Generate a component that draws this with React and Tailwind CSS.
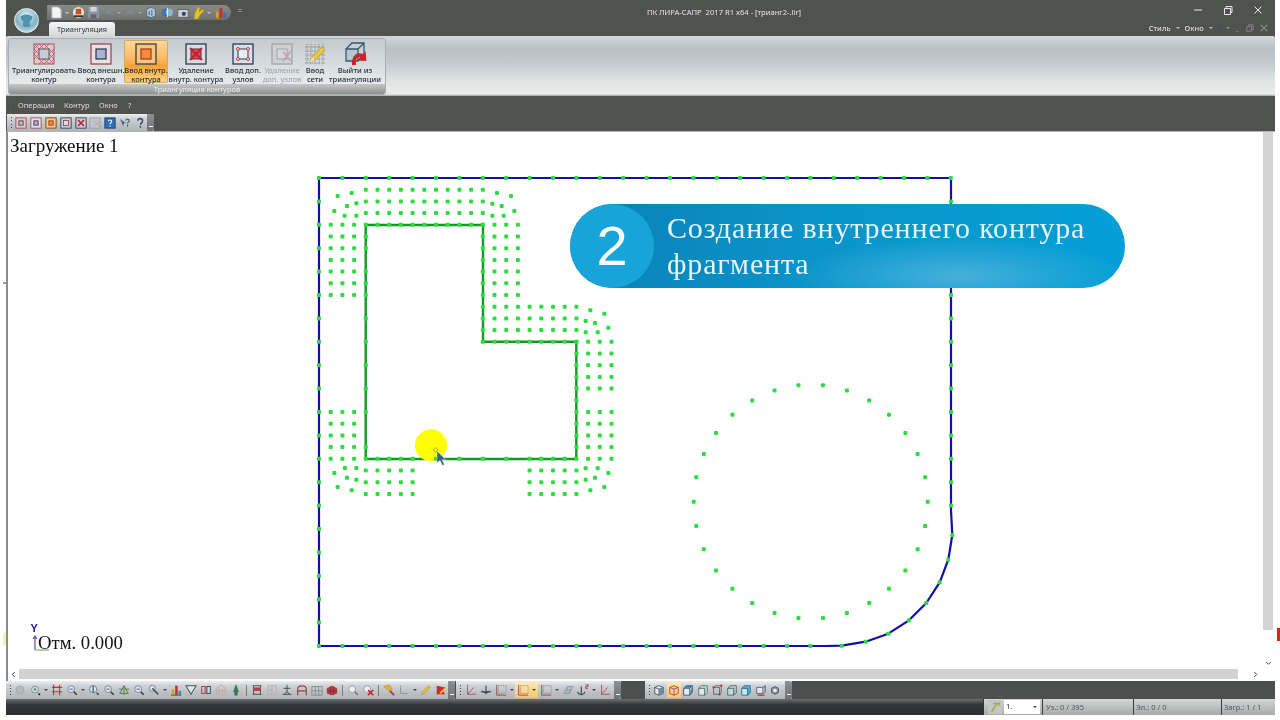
import React from "react";

const X = (i) => 319 + 11.7 * i;
const Y = (j) => 178 + 11.7 * j;
const range = (a, b) => Array.from({ length: b - a + 1 }, (_, k) => a + k);

function buildDots() {
  const d = [];
  const grid = (is, js) => js.forEach((j) => is.forEach((i) => d.push([X(i), Y(j)])));
  grid(range(4, 14), [1, 2, 3, 4]);
  grid([1, 2, 3], range(4, 10));
  grid([15, 16, 17], range(4, 10));
  grid([14], range(4, 14));
  grid(range(15, 22), [11, 12, 13, 14]);
  grid([23, 24, 25], range(14, 18));
  grid([23, 24, 25], range(20, 24));
  grid([1, 2, 3], range(20, 24));
  grid([22], range(14, 24));
  grid([4], [5, 6, 8, 9, 10, 12, 14, 16, 18, 20, 23, 24]);
  grid([5, 6, 7, 8, 10, 12, 14, 16, 18, 19, 20, 21], [24]);
  grid(range(4, 8), [25, 26, 27]);
  grid(range(18, 22), [25, 26, 27]);
  const zoomA = [
    [83, 78], [125, 69], [73, 123], [111, 108], [139, 100], [104, 137], [139, 137],
    [561, 69], [603, 78], [547, 101], [575, 108], [613, 123], [547, 137], [581, 137],
    [841, 421], [883, 431], [827, 453], [855, 459], [895, 473], [827, 487], [863, 487],
  ];
  zoomA.forEach(([a, b]) => d.push([310 + a / 3, 170 + b / 3]));
  const zoomB = [
    [73, 399], [111, 413], [139, 419], [83, 441], [125, 451], [105, 384], [139, 384],
    [827, 385], [863, 385], [895, 399], [855, 413], [827, 419], [883, 441], [841, 451],
  ];
  zoomB.forEach(([a, b]) => d.push([310 + a / 3, 340 + b / 3]));
  range(0, 29).forEach((k) => {
    const t = (k * 12 * Math.PI) / 180;
    d.push([810.7 + 117 * Math.cos(t), 501.7 + 117 * Math.sin(t)]);
  });
  return d;
}

function buildOuter() {
  const d = [];
  range(0, 27).forEach((k) => d.push([319 + 23.4 * k, 178]));
  range(1, 20).forEach((k) => d.push([319, 178 + 23.4 * k]));
  range(1, 14).forEach((k) => d.push([951, 178 + 23.4 * k]));
  range(1, 21).forEach((k) => d.push([319 + 23.4 * k, 646]));
  [[952.3, 535], [948.3, 559.7], [939.7, 582.3], [926.3, 603], [909, 620.3], [888.3, 633.7], [865.7, 641.7], [841.7, 645.7]].forEach((p) => d.push(p));
  return d;
}

const dots = buildDots();
const outer = buildOuter();

function Drawing() {
  return (
    <svg viewBox="8 132 1255 537" className="block w-[1255px] h-[537px]">
      <path d="M319 178H951V510L952.300 535L948.300 559.700L939.700 582.300L926.300 603L909 620.300L888.300 633.700L865.700 641.700L841.700 645.700L826 646H319Z" fill="none" stroke="#1010a8" strokeWidth="2.200" strokeLinejoin="round" />
      <path d="M365.7 225H483V341.7H576.3V459H365.7Z" fill="none" stroke="#129a24" strokeWidth="2.400" />
      <circle cx="431" cy="445.3" r="16" fill="#ffff00" />
      {dots.map(([x, y], k) => (
        <rect key={k} x={x - 2} y={y - 2} width="4" height="4" rx="1" fill="#2fdc40" />
      ))}
      {outer.map(([x, y], k) => (
        <rect key={k} x={x - 2} y={y - 2} width="4" height="4" rx="1" fill="#2fdc40" />
      ))}
      <path d="M435.7 447.5l2.2 2.5-2.2 2.5-2.2-2.5Z" fill="none" stroke="#8a8a30" strokeWidth="0.7" />
      <path d="M437 451l0 12 3-2.6 2.4 5 2-1-2.4-4.6 3.6-.2Z" fill="#3c5f8f" stroke="#dfe8f0" strokeWidth="0.5" />
      <text x="30.500" y="632" fontFamily="'Liberation Sans',sans-serif" fontWeight="700" fontSize="11" fill="#1a1aa8">Y</text>
      <path d="M35 650V636M33 639l2-3 2 3" fill="none" stroke="#6a5ab0" strokeWidth="1.3" />
      <path d="M35 650H49" fill="none" stroke="#6f9a6f" strokeWidth="1" />
    </svg>
  );
}

/* ---------- Ribbon icons ---------- */
function IconMesh() {
  return (
    <svg viewBox="0 0 22 22" className="w-[22px] h-[22px]">
      <rect x="1" y="1" width="20" height="20" fill="#e6c6ce" stroke="#a8515f" strokeWidth="1" />
      <path d="M1 6L6 1M1 11L11 1M1 16L16 1M6 21L21 6M11 21L21 11M16 21L21 16M6 1L21 16M1 1L21 21M1 6L16 21M11 1L21 11M1 11L11 21" stroke="#b4485c" strokeWidth="0.7" fill="none" />
      <rect x="6" y="6" width="10" height="10" fill="#c8ccd0" stroke="#55585c" strokeWidth="1" />
    </svg>
  );
}
function IconOuter() {
  return (
    <svg viewBox="0 0 22 22" className="w-[22px] h-[22px]">
      <rect x="1" y="1" width="20" height="20" fill="#e4e2e6" stroke="#a8454f" strokeWidth="1.3" />
      <rect x="6" y="6" width="10" height="10" fill="#a9b4d0" stroke="#2e3444" strokeWidth="1.2" />
    </svg>
  );
}
function IconInner() {
  return (
    <svg viewBox="0 0 22 22" className="w-[22px] h-[22px]">
      <rect x="1" y="1" width="20" height="20" fill="#f9c47c" stroke="#3a3f48" strokeWidth="1.3" />
      <rect x="6" y="6" width="10" height="10" fill="#f58c3c" stroke="#a8302c" strokeWidth="1.2" />
    </svg>
  );
}
function IconDelete() {
  return (
    <svg viewBox="0 0 22 22" className="w-[22px] h-[22px]">
      <rect x="1" y="1" width="20" height="20" fill="#d8dce6" stroke="#2e3a50" strokeWidth="1.3" />
      <rect x="6" y="6" width="10" height="10" fill="#c85060" stroke="#6e2430" strokeWidth="1" />
      <path d="M5 5L17 17M17 5L5 17" stroke="#cc1f2a" strokeWidth="2" />
    </svg>
  );
}
function IconNodes() {
  return (
    <svg viewBox="0 0 22 22" className="w-[22px] h-[22px]">
      <rect x="1" y="1" width="20" height="20" fill="#d8dfe8" stroke="#2e3a50" strokeWidth="1.3" />
      <rect x="6" y="6" width="10" height="10" fill="#e8ecf0" stroke="#333a48" strokeWidth="1" />
      {[[6, 6], [16, 6], [6, 16], [16, 16]].map(([x, y], k) => (
        <circle key={k} cx={x} cy={y} r="1.5" fill="#e8e8e8" stroke="#c02a32" strokeWidth="0.9" />
      ))}
    </svg>
  );
}
function IconDelNodes() {
  return (
    <svg viewBox="0 0 22 22" className="w-[22px] h-[22px]">
      <rect x="1" y="1" width="20" height="20" fill="#ced2d8" stroke="#a2a6ac" strokeWidth="1.3" />
      <rect x="6" y="6" width="10" height="10" fill="#d4d8dc" stroke="#a2a2a8" strokeWidth="1" />
      <path d="M12 9L20 18M20 8L12 18" stroke="#b8a4a8" strokeWidth="1.5" />
    </svg>
  );
}
function IconNet() {
  return (
    <svg viewBox="0 0 22 22" className="w-[22px] h-[22px]">
      <path d="M1 4H21M1 8H21M1 12H21M1 16H21M1 20H21M3 1V22M7 1V22M11 1V22M15 1V22M19 1V22" stroke="#7a7c8c" strokeWidth="0.8" strokeDasharray="1.3 1" />
      <path d="M5 20L8 14L18 4L21 7L11 17Z" fill="#f0c832" stroke="#a08a30" strokeWidth="0.6" />
      <path d="M5 20L8 14L11 17Z" fill="#e8e0c0" />
    </svg>
  );
}
function IconExit() {
  return (
    <svg viewBox="0 0 24 24" className="w-[24px] h-[24px]">
      <path d="M3 7H15V19H3Z" fill="#b8c8d2" />
      <path d="M3 7H15V19H3ZM3 7L9 1H21V13L15 19M15 7L21 1" fill="none" stroke="#2f5a70" strokeWidth="1.300" />
      <path d="M9 23C8 14 14 9 20 12L22.500 9L23.500 19L14 18.500L17 15.500C14 14.500 12.500 17 13 23Z" fill="#c8242c" />
    </svg>
  );
}

function RibbonBtn({ w, l1, l2, icon, active, disabled }) {
  return (
    <div className={`${w} h-[43px] flex flex-col items-center pt-[2px] rounded-[2px] ${active ? "bg-[linear-gradient(180deg,#fddaa0_0%,#fbb85c_45%,#f8a234_60%,#fcd98a_100%)] shadow-[inset_0_0_0_1px_#d9a860]" : ""}`}>
      <div className="h-[23px] flex items-center justify-center">{icon}</div>
      <div className={`mt-[1px] text-[7.5px] leading-[8.500px] text-center whitespace-nowrap font-medium ${disabled ? "text-[#a4aab0]" : "text-[#27303a]"}`}>
        <div>{l1}</div>
        <div>{l2}</div>
      </div>
    </div>
  );
}

/* ---------- Small toolbar icons ---------- */
function Mini({ k, size = 13 }) {
  const s = { width: size, height: size };
  const body = {
    tri: <><rect x="1" y="1" width="12" height="12" fill="#e3c5cd" stroke="#a04a5c" /><rect x="4.5" y="4.5" width="5" height="5" fill="#b9bcc4" stroke="#444" /></>,
    out: <><rect x="1" y="1" width="12" height="12" fill="#e4e2e6" stroke="#a8454f" /><rect x="4.5" y="4.5" width="5" height="5" fill="#a9b4d0" stroke="#2e3444" /></>,
    inn: <><rect x="0" y="0" width="14" height="14" fill="#fbc777" /><rect x="1" y="1" width="12" height="12" fill="#fbc777" stroke="#444" /><rect x="4.5" y="4.5" width="5" height="5" fill="#f58c3c" stroke="#a8302c" /></>,
    nod: <><rect x="1" y="1" width="12" height="12" fill="#c9cfd8" stroke="#2e3a50" /><rect x="4" y="4" width="6" height="6" fill="#d9dde2" stroke="#a04050" /></>,
    del: <><rect x="1" y="1" width="12" height="12" fill="#c9cfd8" stroke="#2e3a50" /><path d="M3.5 3.5L10.5 10.5M10.5 3.5L3.5 10.5" stroke="#c81f2a" strokeWidth="2" /></>,
    dis: <><rect x="1" y="1" width="12" height="12" fill="#c2c6ca" stroke="#9a9ea4" /><path d="M6 5L12 11M12 5L6 11" stroke="#b09ca0" /></>,
    help: <><rect x="1" y="1" width="12" height="12" fill="#2f6fb4" stroke="#1c3a68" /><path d="M5 5c0-2 4-2 4 0 0 2-2 1.500-2 3.500M7 10v1.500" stroke="#fff" fill="none" strokeWidth="1.2" /></>,
    helpArrow: <><path d="M1 2L5 11L6 7L9 8Z" fill="#5a6a8a" /><path d="M8 4c0-2 4-2 4 0 0 2-2 1.500-2 3.500M10 9v2" stroke="#38486a" fill="none" strokeWidth="1.2" /></>,
    q: <path d="M4.500 4.500c0-3.500 5.500-3.500 5.500 0 0 2.500-2.500 2-2.500 4.500M7.500 10.500v2" stroke="#3f4a6a" fill="none" strokeWidth="1.800" />,
    faint: <circle cx="7" cy="7" r="4.500" fill="#b8babc" stroke="#a2a4a6" />,
    target: <><circle cx="7" cy="6.500" r="4" fill="#d8dde2" stroke="#6a8a8a" /><circle cx="7" cy="6.500" r="1.500" fill="#3a9a5a" /><circle cx="12" cy="12" r="1.200" fill="#222" /></>,
    grid: <path d="M3 1V13M10 1V13M1 4H13M1 9H13" stroke="#b83a48" strokeWidth="1.300" fill="none" />,
    mag: <><circle cx="6" cy="6" r="4" fill="#dde4ea" stroke="#6c8090" /><path d="M4 6H8" stroke="#3a5a70" /><path d="M9 9L12.500 12.500" stroke="#333" strokeWidth="1.500" /></>,
    mag2: <><circle cx="6" cy="6" r="4.200" fill="#dde4ea" stroke="#5a7888" /><path d="M6 2V10" stroke="#2a4a60" strokeWidth="1.300" /><path d="M10 10L12.500 12.500" stroke="#333" strokeWidth="1.400" /></>,
    star: <><path d="M2 11L7 2L12 11ZM1 6H13M7 2V13" fill="none" stroke="#3a7a5a" strokeWidth="1" /><circle cx="7" cy="7" r="1.800" fill="#b8a020" /></>,
    pencilMag: <><circle cx="5" cy="5" r="3.500" fill="#dde4ea" stroke="#6c8090" /><path d="M5 5L12 12" stroke="#4a5a70" strokeWidth="2" /></>,
    chart: <><rect x="2" y="6" width="3" height="7" fill="#d8a020" /><rect x="6" y="2" width="3" height="11" fill="#c03030" /><rect x="10" y="8" width="3" height="5" fill="#3a8ac0" /><path d="M1 13H13" stroke="#2a7a3a" strokeWidth="1.200" /></>,
    funnel: <path d="M1 2H13L7 12Z" fill="#dfe6ea" stroke="#4a5a6a" strokeWidth="1.200" />,
    mirror: <><path d="M2 3H6V11H2Z" fill="none" stroke="#b8404a" strokeWidth="1.200" /><path d="M8 3H12V11H8Z" fill="#cfe0ea" stroke="#3a4a6a" strokeWidth="1.200" /></>,
    bridge: <path d="M2 13V5L7 1L12 5V13M5 13V6M9 13V6M2 8H12" stroke="#c8a0a0" fill="none" />,
    tree: <path d="M7 1L10 9H8.500V13H5.500V9H4Z" fill="#3a7a50" stroke="#2a5a3a" strokeWidth="0.500" />,
    frameR: <><path d="M2 2H12M2 12H12M3 2V12M11 2V12M3 7H11" stroke="#444" fill="none" /><rect x="3" y="4" width="8" height="4" fill="#c03a48" /></>,
    frameL: <path d="M2 2H12V12H2ZM7 2V12M2 7H7" stroke="#b8b0a8" fill="none" />,
    anchorB: <path d="M7 1V9M3 5H11M2 12H12M4 12L7 9L10 12" stroke="#3a3a3a" fill="none" />,
    archR: <path d="M2 13V6C2 1 12 1 12 6V13M2 8H12" stroke="#a03a48" strokeWidth="1.400" fill="none" />,
    frameG: <path d="M1 3H13V13H1ZM5 3V13M9 3V13M1 8H13" stroke="#7a8a8a" fill="none" />,
    bars: <><path d="M1 5L7 2L13 5V11L7 13L1 11Z" fill="#b83a48" /><path d="M1 8H13M5 3V13M9 3V13" stroke="#6a2430" strokeWidth="0.700" /></>,
    zm: <><circle cx="6" cy="6" r="4" fill="#eef0f2" stroke="#8a96a0" /><path d="M9 9L12.500 12.500" stroke="#667" strokeWidth="1.500" /></>,
    zmR: <><circle cx="6" cy="6" r="4" fill="#eef0f2" stroke="#8a96a0" /><path d="M7 7L13 13M13 7L7 13" stroke="#c02030" strokeWidth="1.800" /></>,
    flash: <><path d="M1 3L7 1L11 6L8 9Z" fill="#e8b030" stroke="#a07820" strokeWidth="0.500" /><path d="M8 8L13 13" stroke="#a03a48" strokeWidth="2" /></>,
    axisDot: <path d="M3 2V11H12" stroke="#6c7a8a" fill="none" strokeDasharray="2 1" />,
    pencil: <path d="M2 12L3 9L10 2L12 4L5 11Z" fill="#e8c030" stroke="#a08a30" strokeWidth="0.600" />,
    redFlag: <><path d="M2 2L12 4L9 8L12 12L2 12Z" fill="#d02a30" /><path d="M6 11L12 5" stroke="#e8c030" strokeWidth="2" /></>,
    axisL: <path d="M3 1V12H13M3 12L10 4" stroke="#a8485a" fill="none" />,
    anchor: <path d="M7 2V12M3 8C3 11 11 11 11 8M1 9H13" stroke="#38485a" fill="none" strokeWidth="1.300" />,
    xz: <><rect x="4" y="2" width="9" height="9" fill="none" stroke="#8a8a96" strokeDasharray="1.500 1" /><path d="M2 1V13H13" stroke="#a03a30" fill="none" /></>,
    hatch: <path d="M2 11L6 3H13L9 11ZM5 7H11M7 3L5 11M10 3L8 11" stroke="#7c8c96" fill="none" strokeWidth="0.800" />,
    anchor2: <><path d="M5 3V13M1 9C1 13 9 13 9 9" stroke="#38485a" fill="none" strokeWidth="1.300" /><path d="M10 1H13V3H10V5H13" stroke="#a03a48" fill="none" /></>,
    c1: <><path d="M2 4L7 2L12 4V11L7 13L2 11Z" fill="#e6ecf0" stroke="#3e4e5e" /><path d="M7 6V13M2 4L7 6L12 4" stroke="#3e4e5e" fill="none" /><path d="M7 6L12 4V11L7 13Z" fill="#6a8aa8" /></>,
    c2: <><path d="M2 4L7 2L12 4V11L7 13L2 11Z" fill="#f2d0a0" stroke="#b83a40" /><path d="M7 6V13M2 4L7 6L12 4" stroke="#b83a40" fill="none" /></>,
    c3: <><path d="M2 5H9V13H2Z" fill="#e6ecf0" stroke="#3e4e5e" /><path d="M2 5L5 2H12L9 5M12 2V10L9 13" fill="#4a8ac8" stroke="#2e5a8a" /></>,
    c4: <><path d="M2 5H9V13H2Z" fill="#e0e8ea" stroke="#5a7078" /><path d="M2 5L5 2H12V10L9 13V5Z" fill="#c4d4d8" stroke="#5a7078" /></>,
    c5: <><path d="M3 4H10V12H3ZM3 4L5 2H12V10L10 12" fill="none" stroke="#5a6068" /><circle cx="3" cy="4" r="1.300" fill="#c02a38" /><circle cx="10" cy="12" r="1.300" fill="#c02a38" /><circle cx="12" cy="2" r="1.300" fill="#c02a38" /></>,
    c6: <><path d="M2 5H9V13H2Z" fill="#c4dce0" stroke="#3e5e5e" /><path d="M2 5L5 2H12V10L9 13" fill="none" stroke="#3e5e5e" /></>,
    c7: <><path d="M2 5H9V13H2Z" fill="#bfe8f4" stroke="#2e6a8a" /><path d="M2 5L5 2H12V10L9 13V5Z" fill="#5ab0dc" stroke="#2e6a8a" /></>,
    c8: <><path d="M2 4H9V11H2Z" fill="#e4e8ea" stroke="#4e5e6e" /><path d="M9 4L12 2V9L9 11" fill="#a8b4c0" stroke="#4e5e6e" /><path d="M3 13H11" stroke="#c02a38" strokeWidth="1.500" /></>,
    c9: <><path d="M3 5L7 3L11 5V10L7 12L3 10Z" fill="#8a9aa6" stroke="#3e4e5e" /><circle cx="7" cy="7.500" r="2" fill="#e6eaee" /></>,
  }[k];
  return (
    <svg viewBox="0 0 14 14" style={s} className="shrink-0">
      {body}
    </svg>
  );
}

function Arr() {
  return <span className="w-[7px] flex justify-center"><span className="w-0 h-0 border-x-[2px] border-x-transparent border-t-[2px] border-t-[#444]" /></span>;
}
function Sep() {
  return <span className="w-[6px] flex justify-center"><span className="w-px h-[11px] bg-[#7c8084]" /></span>;
}
function Cell({ k }) {
  return <span className="w-[15px] flex justify-center"><Mini k={k} size={12} /></span>;
}
function Grip() {
  return (
    <span className="w-[6px] h-[11px] flex flex-col justify-between items-center shrink-0">
      <i className="w-[1px] h-[1px] bg-[#444]" /><i className="w-[1px] h-[1px] bg-[#444]" /><i className="w-[1px] h-[1px] bg-[#444]" /><i className="w-[1px] h-[1px] bg-[#444]" />
    </span>
  );
}
function Cap() {
  return (
    <span className="ml-auto w-[7px] h-full rounded-r-[2px] bg-[linear-gradient(180deg,#8e9092,#6e7072)] flex items-end justify-center pb-[2px]">
      <span className="w-[4px] h-[3px] border-t border-white" />
    </span>
  );
}

function Row({ items }) {
  return items.map((it, n) =>
    it === "|" ? <Sep key={n} /> : it === "v" ? <Arr key={n} /> : <Cell key={n} k={it} />
  );
}

const tb1 = ["faint", "target", "v", "grid", "mag", "v", "mag2", "mag", "star", "mag", "pencilMag", "v", "chart", "funnel", "mirror", "bridge", "tree", "|", "frameR", "frameL", "anchorB", "archR", "frameG", "bars", "|", "zm", "zmR", "|", "flash", "axisDot", "v", "pencil", "redFlag"];
const tb3 = ["c1", "c2", "c3", "c4", "c5", "c6", "c7", "c8", "c9"];
const barBg = "bg-[linear-gradient(180deg,#eceeee_0%,#d0d3d5_25%,#bfc3c6_60%,#b0b4b7_100%)]";

/* ---------- Quick access ---------- */
function QA() {
  return (
    <div className="ml-[1px] mt-[5px] w-[184px] h-[15px] rounded-r-full bg-[linear-gradient(180deg,#8a8c8a,#6f716f)] flex items-center pl-[3px]">
      <svg viewBox="0 0 12 14" className="w-[11px] h-[13px] ml-[1px]"><path d="M1 1H8L11 4V13H1Z" fill="#f2f4f6" stroke="#b8bcc0" /></svg>
      <span className="w-[8px] ml-[1px] flex justify-center"><span className="w-0 h-0 border-x-[2px] border-x-transparent border-t-[2px] border-t-[#c4c4c4]" /></span>
      <svg viewBox="0 0 14 14" className="w-[13px] h-[13px] ml-[1px]"><circle cx="7" cy="7" r="6" fill="#e8e4d8" /><path d="M4 3H10V9H4Z" fill="#c8501c" /><path d="M2 10H12V12H2Z" fill="#333" /></svg>
      <svg viewBox="0 0 14 14" className="w-[13px] h-[13px] ml-[2px]"><path d="M1 1H13V13H1Z" fill="#8a94a0" /><path d="M3.500 1H10.500V6H3.500Z" fill="#d0d6dc" /><path d="M4 9H10V13H4Z" fill="#5c646c" /></svg>
      <svg viewBox="0 0 14 14" className="w-[12px] h-[12px] ml-[3px]"><path d="M2 6L6 2V4.500C10 4.500 12 7 12 11C11 8.500 9 7.500 6 7.500V10Z" fill="#7d8a92" /></svg>
      <span className="w-[8px] flex justify-center"><span className="w-0 h-0 border-x-[2px] border-x-transparent border-t-[2px] border-t-[#a8a8a8]" /></span>
      <svg viewBox="0 0 14 14" className="w-[12px] h-[12px] ml-[1px]"><path d="M12 6L8 2V4.500C4 4.500 2 7 2 11C3 8.500 5 7.500 8 7.500V10Z" fill="#7d8a92" /></svg>
      <span className="w-[8px] flex justify-center"><span className="w-0 h-0 border-x-[2px] border-x-transparent border-t-[2px] border-t-[#a8a8a8]" /></span>
      <svg viewBox="0 0 14 14" className="w-[12px] h-[13px] ml-[1px]"><path d="M2 3L7 1L12 3V11L7 13L2 11Z" fill="#b8c8d4" stroke="#3e6a8a" /><path d="M5 5V10M8 4V11" stroke="#2e5a8a" /></svg>
      <svg viewBox="0 0 14 14" className="w-[13px] h-[13px] ml-[4px]"><circle cx="5" cy="7" r="4" fill="#3a70b8" /><circle cx="9" cy="7" r="4" fill="#90b4d8" /><path d="M7 2V12" stroke="#e8eef2" /></svg>
      <svg viewBox="0 0 14 14" className="w-[12px] h-[12px] ml-[3px]"><rect x="1" y="3" width="12" height="9" fill="#c8d0d6" stroke="#5a6268" /><circle cx="8" cy="8" r="2.500" fill="#3a4a5a" /></svg>
      <svg viewBox="0 0 14 14" className="w-[14px] h-[14px] ml-[2px]"><path d="M3 13L4 7L7 1L9 2L8 6L12 3L13 5L9 9L7 13Z" fill="#e8c020" stroke="#a88a10" strokeWidth="0.500" /></svg>
      <span className="w-[8px] flex justify-center"><span className="w-0 h-0 border-x-[2px] border-x-transparent border-t-[2px] border-t-[#c4c4c4]" /></span>
      <svg viewBox="0 0 14 14" className="w-[13px] h-[13px] ml-[1px]"><rect x="2" y="6" width="3" height="7" fill="#d8a020" /><rect x="6" y="2" width="3" height="11" fill="#c03030" /><rect x="10" y="7" width="3" height="6" fill="#3a70c0" /></svg>
    </div>
  );
}

export default function App() {
  return (
    <div className="relative w-[1280px] h-[720px] overflow-hidden bg-white pl-[6px] pr-[5px] pb-[5px] font-['Noto_Sans','Liberation_Sans',sans-serif]">
      <div className="h-full flex flex-col bg-[#50524f] blur-[0.35px]">
        {/* header */}
        <div className="h-[36px] flex shrink-0 bg-[#50524f]">
          <div className="w-[40px] pl-[8px] pt-[2px]">
            <div className="w-[25px] h-[25px] mt-[6px] rounded-full border border-[#e8eef0] bg-[radial-gradient(circle_at_50%_30%,#e4f0f4,#82b2c4_55%,#eaf2f4_100%)] flex items-center justify-center">
              <svg viewBox="0 0 16 16" className="w-[15px] h-[15px]"><path d="M2 4L6 2H10L14 4L12.500 8L11 7V14H5V7L3.500 8Z" fill="#4f94ad" stroke="#2f6f88" strokeWidth="0.500" /></svg>
            </div>
          </div>
          <div className="flex-1 flex flex-col">
            <div className="h-[22px] flex items-start">
              <QA />
              <span className="ml-[5px] mt-[9px] w-[7px] flex flex-col gap-[1px] items-center">
                <i className="w-[4px] h-px bg-[#8a8c8a]" />
                <i className="w-[4px] h-px bg-[#8a8c8a]" />
              </span>
              <div className="flex-1 pl-[20px] pt-[6px] text-center text-[7.6px] leading-[12px] text-[#e6e6e6] whitespace-pre">ПК ЛИРА-САПР  2017 R1 x64 - [трианг2-.lir]</div>
              <div className="w-[90px] pt-[4px] flex gap-[18px] pl-[7px] text-[#eee]">
                <svg viewBox="0 0 12 12" className="w-[12px] h-[12px]"><path d="M2 6H10" stroke="#e8e8e8" strokeWidth="1" /></svg>
                <svg viewBox="0 0 12 12" className="w-[12px] h-[12px]"><path d="M2.500 4.500H8.500V10.500H2.500ZM4 4.500V2.500H10V8.500H8.500" fill="none" stroke="#e8e8e8" strokeWidth="1" /></svg>
                <svg viewBox="0 0 12 12" className="w-[12px] h-[12px]"><path d="M2.500 2.500L9.500 9.500M9.500 2.500L2.500 9.500" stroke="#e8e8e8" strokeWidth="1" /></svg>
              </div>
            </div>
            <div className="h-[14px] flex items-end">
              <div className="ml-[3px] w-[66px] h-[14px] rounded-t-[3px] bg-[linear-gradient(180deg,#f4f6f6,#d4d8da)] text-[7.4px] leading-[14px] text-center text-[#333]">Триангуляция</div>
              <div className="ml-auto mr-[7px] mb-[3px] flex items-center text-[7.5px] leading-[10px] text-[#dcdcdc] font-medium">
                <span>Стиль</span>
                <span className="w-[14px] flex justify-center"><span className="w-0 h-0 border-x-[2px] border-x-transparent border-t-[2px] border-t-[#bbb]" /></span>
                <span>Окно</span>
                <span className="w-[14px] flex justify-center"><span className="w-0 h-0 border-x-[2px] border-x-transparent border-t-[2px] border-t-[#bbb]" /></span>
                <span className="text-[#35507c] font-bold text-[9px]">?</span>
                <span className="w-[8px] ml-[2px] flex justify-center"><span className="w-0 h-0 border-x-[2px] border-x-transparent border-t-[2px] border-t-[#999]" /></span>
                <span className="w-[11px] text-[#8f9190] text-center">_</span>
                <svg viewBox="0 0 10 10" className="w-[8px] h-[8px] mx-[3px]"><path d="M1 3H7V9H1ZM3 3V1H9V7H7" fill="none" stroke="#8f9190" /></svg>
                <svg viewBox="0 0 10 10" className="w-[8px] h-[8px] ml-[3px]"><path d="M1 1L9 9M9 1L1 9" stroke="#8f9190" strokeWidth="1.300" /></svg>
              </div>
            </div>
          </div>
        </div>

        {/* ribbon */}
        <div className="h-[60px] shrink-0 rounded-t-[2px] pl-[2px] pt-[2px] bg-[linear-gradient(180deg,#d4d7d9_0%,#b9bfc4_22%,#c3c9cd_45%,#dfe4e4_75%,#e8ece9_97%,#9a9c9c_100%)]">
          <div className="w-[378px] h-[57px] rounded-[3px] overflow-hidden flex flex-col border border-[#a8aeb2] bg-[linear-gradient(180deg,#c3cbd0_0%,#d4dadd_40%,#eef1f0_100%)]">
            <div className="h-[45px] flex pl-[1px] pt-[1px]">
              <RibbonBtn w="w-[68px]" l1="Триангулировать" l2="контур" icon={<IconMesh />} />
              <RibbonBtn w="w-[46px]" l1="Ввод внешн." l2="контура" icon={<IconOuter />} />
              <RibbonBtn w="w-[44px]" l1="Ввод внутр." l2="контура" icon={<IconInner />} active />
              <RibbonBtn w="w-[56px]" l1="Удаление" l2="внутр. контура" icon={<IconDelete />} />
              <RibbonBtn w="w-[38px]" l1="Ввод доп." l2="узлов" icon={<IconNodes />} />
              <RibbonBtn w="w-[40px]" l1="Удаление" l2="доп. узлов" icon={<IconDelNodes />} disabled />
              <RibbonBtn w="w-[26px]" l1="Ввод" l2="сети" icon={<IconNet />} />
              <RibbonBtn w="w-[54px]" l1="Выйти из" l2="триангуляции" icon={<IconExit />} />
            </div>
            <div className="flex-1 bg-[linear-gradient(180deg,#c6c8c8,#8f9191)] text-center text-[7.5px] leading-[10px] text-[#eceeee]">Триангуляция контуров</div>
          </div>
        </div>

        {/* menu */}
        <div className="h-[18px] shrink-0 flex items-center pl-[4px] pt-[2px] text-[7.5px] text-[#dedede]">
          <Grip />
          <span className="ml-[2px] w-[46px]">Операция</span>
          <span className="w-[35px]">Контур</span>
          <span className="w-[29px]">Окно</span>
          <span>?</span>
        </div>

        {/* toolbar */}
        <div className="h-[17px] shrink-0 flex">
          <div className={`w-[147px] ml-[1px] h-[17px] rounded-tr-[3px] flex items-center pl-[1px] ${barBg}`}>
            <Grip />
            {["tri", "out", "inn", "nod", "del", "dis", "help", "helpArrow", "q"].map((k) => (
              <span key={k} className="w-[15px] flex justify-center"><Mini k={k} size={12} /></span>
            ))}
            <Cap />
          </div>
        </div>

        {/* canvas */}
        <div className="flex-1 min-h-0 flex flex-col border-t border-[#b4b6b6] border-l-2 border-l-[#8a8c8c] bg-white">
          <div className="relative h-[536px] flex overflow-hidden">
            <Drawing />
            <div className="w-[10px] h-[537px] flex flex-col items-center">
              <div className="w-[10px] h-[498px] bg-[#d4d4d4]" />
              <div className="mt-[31px] text-[#666] leading-none">
                <svg viewBox="0 0 8 6" className="w-[7px] h-[5px]"><path d="M1 1L4 4L7 1" fill="none" stroke="#555" strokeWidth="1.200" /></svg>
              </div>
            </div>
            <div className="absolute left-[2px] top-[3px] font-['Liberation_Serif',serif] text-[19px] leading-[22px] text-[#111]">Загружение 1</div>
            <div className="absolute left-[30px] top-[500px] font-['Liberation_Serif',serif] text-[18.7px] leading-[22px] text-[#111]">Отм. 0.000</div>

            {/* pill */}
            <div className="absolute left-[562px] top-[72px] w-[555px] h-[84px] rounded-full overflow-hidden flex items-center bg-[radial-gradient(ellipse_30%_45%_at_70%_85%,#45b0dc_0%,#45b0dc00_100%),linear-gradient(90deg,#0a80b6_0%,#0a93c8_40%,#04a0d6_100%)]">
              <div className="w-[84px] h-[84px] shrink-0 rounded-full bg-[#19a4d9] flex items-center justify-center font-['Liberation_Sans',sans-serif] text-[56px] leading-none text-[#f4fbfe]">2</div>
              <div className="ml-[13px] font-['Liberation_Serif',serif] text-[30px] leading-[36px] tracking-[0.85px] text-[#e6f5fb]">
                <div>Создание внутреннего контура</div>
                <div>фрагмента</div>
              </div>
            </div>
          </div>

          {/* hscroll */}
          <div className="h-[12px] flex items-center bg-white">
            <span className="w-[11px] flex justify-center">
              <svg viewBox="0 0 6 8" className="w-[5px] h-[7px]"><path d="M4.500 1L1.500 4L4.500 7" fill="none" stroke="#444" strokeWidth="1.200" /></svg>
            </span>
            <div className="w-[1219px] h-[10px] bg-[#d2d2d2]" />
            <span className="ml-[15px]">
              <svg viewBox="0 0 6 8" className="w-[5px] h-[7px]"><path d="M1.500 1L4.500 4L1.500 7" fill="none" stroke="#444" strokeWidth="1.200" /></svg>
            </span>
          </div>
        </div>

        {/* bottom toolbars */}
        <div className="h-[18px] shrink-0 flex bg-[#4d4e4e]">
          <div className={`w-[449px] h-[18px] flex items-center pl-[1px] ${barBg}`}>
            <Grip />
            <Row items={tb1} />
            <Cap />
          </div>
          <div className={`ml-[1px] w-[165px] h-[18px] flex items-center pl-[1px] ${barBg}`}>
            <Grip />
            <Cell k="axisL" />
            <Cell k="anchor" />
            <Cell k="xz" />
            <Arr />
            <span className="w-[23px] h-[16px] flex items-center bg-[linear-gradient(180deg,#fdeab8,#fbc468)]">
              <span className="w-[15px] flex justify-center"><Mini k="xz" size={12} /></span>
              <Arr />
            </span>
            <Cell k="xz" />
            <Arr />
            <Cell k="hatch" />
            <Cell k="anchor2" />
            <Arr />
            <Cell k="axisL" />
            <Cap />
          </div>
          <div className={`ml-[24px] w-[147px] h-[18px] flex items-center pl-[1px] ${barBg}`}>
            <Grip />
            {tb3.map((k) => (
              <span key={k} className={`w-[14.5px] h-[16px] flex items-center justify-center ${k === "c2" ? "bg-[linear-gradient(180deg,#fdeab8,#fbc468)]" : ""}`}><Mini k={k} size={12} /></span>
            ))}
            <Cap />
          </div>
        </div>

        {/* status */}
        <div className="h-[16px] shrink-0 flex justify-end bg-[linear-gradient(180deg,#6c6e6e_0%,#34363a_35%,#2d2e2e_100%)]">
          <div className="w-[292px] h-[16px] flex items-center pl-[4px] text-[7.5px] text-[#2d2f33] border-l border-[#333] bg-[linear-gradient(180deg,#d4d6d6,#a8aaaa)]">
            <span className="w-[14px] h-[14px] bg-[#c2c6c4] flex items-center justify-center">
              <svg viewBox="0 0 14 14" className="w-[12px] h-[12px]"><path d="M3 13L9 3M5 3H12L11 5.500" stroke="#a4a848" strokeWidth="1.800" fill="none" /></svg>
            </span>
            <div className="ml-[2px] w-[36px] h-[14px] bg-white flex items-center justify-between pl-[2px] pr-[3px]">
              <span>1.</span>
              <span className="w-0 h-0 border-x-[2px] border-x-transparent border-t-[2px] border-t-[#444]" />
            </div>
            <span className="ml-[2px] w-[91px] h-full border-l border-[#3a3a3a] pl-[3px] leading-[16px] text-[#50565c]">Уз.: 0 / 395</span>
            <span className="w-[88px] h-full border-l border-[#3a3a3a] pl-[2px] leading-[16px] text-[#50565c]">Эл.: 0 / 0</span>
            <span className="flex-1 h-full border-l border-[#3a3a3a] pl-[2px] leading-[16px] text-[#50565c]">Загр.: 1 / 1</span>
          </div>
        </div>
      </div>

      {/* artefacts in the margin */}
      <div className="absolute left-[1277px] top-[628px] w-[3px] h-[13px] bg-[#e0240e]" />
      <div className="absolute left-[3px] top-[282px] w-[3px] h-[2px] bg-[#9a9a9a]" />
      <div className="absolute left-[3px] top-[632px] w-[3px] h-[14px] rounded-l-full bg-[#f4f0b8]" />
    </div>
  );
}
